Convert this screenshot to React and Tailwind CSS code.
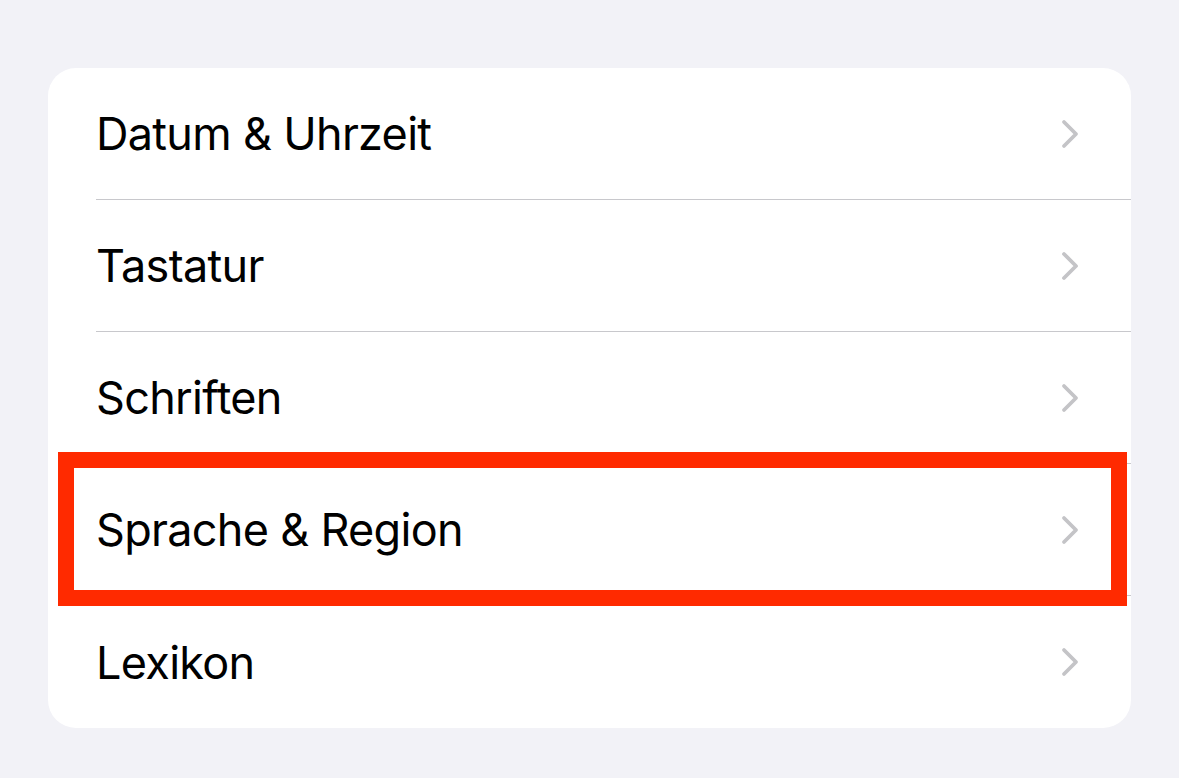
const ROWS = ["Datum & Uhrzeit", "Tastatur", "Schriften", "Sprache & Region", "Lexikon"];

function Chevron() {
  return (
    <svg width="22" height="32" viewBox="0 0 22 32" fill="none" className="shrink-0">
      <path d="M5 4 L17 16 L5 28" stroke="#c4c4c7" strokeWidth="3.8" strokeLinecap="round" strokeLinejoin="round" />
    </svg>
  );
}

export default function App() {
  return (
    <div className="w-[1179px] h-[778px] bg-[#f2f2f7] pt-[68px] pl-[48px] font-['Inter',sans-serif] overflow-hidden">
      <div className="relative w-[1083px] bg-white rounded-[28px]">
        {ROWS.map((label, i) => (
          <div key={label} className="pl-[48px]">
            <div
              className={`h-[132px] flex items-center justify-between pr-[50px] ${
                i < ROWS.length - 1 ? "border-b border-[#c8c8cc]" : "h-[131px]"
              }`}
            >
              <span className="text-[45px] text-black tracking-[-0.7px] leading-none">{label}</span>
              <Chevron />
            </div>
          </div>
        ))}
        <div className="absolute left-[10px] top-[384px] w-[1069px] h-[154px] border-[16px] border-[#ff2a00]" />
      </div>
    </div>
  );
}
